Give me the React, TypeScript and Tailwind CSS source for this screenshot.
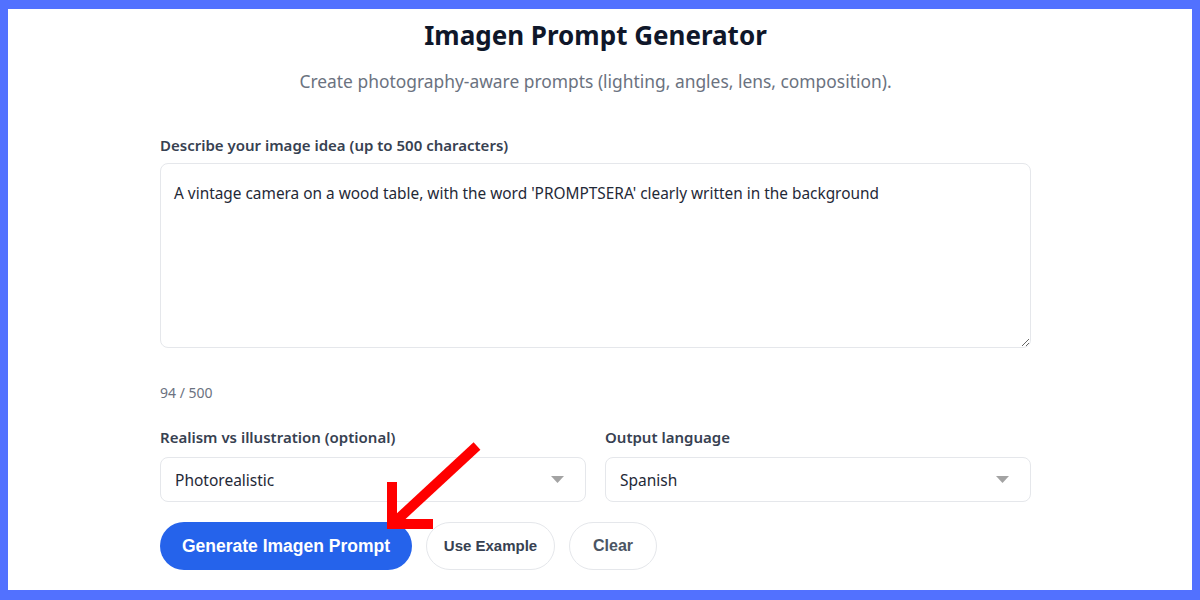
import { useState } from 'react'

const idea =
  "A vintage camera on a wood table, with the word 'PROMPTSERA' clearly written in the background"

function FakeSelect({ label, value }: { label: string; value: string }) {
  return (
    <div className="flex flex-col">
      <label className="text-[15px] leading-5 font-semibold text-[#374151]">{label}</label>
      <div className="mt-[10px] flex h-[45px] items-center justify-between rounded-lg border border-[#e5e7eb] bg-white pl-[14px] pr-[21px] text-[15.5px] text-[#1f2937]">
        <span className="pt-[3px]">{value}</span>
        <svg width="13" height="7" viewBox="0 0 13 7" aria-hidden>
          <path d="M0 0h13L6.5 7z" fill="#a3a3a3" />
        </svg>
      </div>
    </div>
  )
}

export default function App() {
  const [text, setText] = useState(idea)

  return (
    <div
      className="relative h-screen bg-[#5271ff] pt-[9px] pr-[8px] pb-[10px] pl-[8px]"
      style={{ fontFamily: '"Noto Sans", "Open Sans", sans-serif' }}
    >
      <div className="h-full overflow-hidden bg-white">
        <div className="ml-[152px] w-[871px]">
          <h1 className="mt-[10px] text-center text-[26px] leading-8 font-bold text-[#0f172a]">
            Imagen Prompt Generator
          </h1>
          <p className="mt-[18px] text-center text-[17.4px] leading-6 text-[#6b7280]">
            Create photography-aware prompts (lighting, angles, lens, composition).
          </p>

          <label className="mt-[42px] block text-[15px] leading-5 font-semibold text-[#374151]">
            Describe your image idea (up to 500 characters)
          </label>
          <textarea
            value={text}
            onChange={(e) => setText(e.target.value)}
            className="mt-[8px] block h-[185px] w-full rounded-lg border border-[#e5e7eb] px-[13px] py-[18px] text-[15.4px] leading-6 text-[#1f2937] outline-none"
          />
          <p className="mt-[35px] text-[14px] leading-5 text-[#6b7280]">{text.length} / 500</p>

          <div className="mt-[24px] grid grid-cols-2 gap-[19px]">
            <FakeSelect label="Realism vs illustration (optional)" value="Photorealistic" />
            <FakeSelect label="Output language" value="Spanish" />
          </div>

          <div
            className="mt-[20px] flex items-center gap-[14px] font-bold"
            style={{ fontFamily: '"Liberation Sans", Arial, sans-serif' }}
          >
            <button
              type="button"
              className="h-[48px] w-[252px] rounded-full bg-[#2563eb] text-[17.5px] text-white"
            >
              Generate Imagen Prompt
            </button>
            <button
              type="button"
              className="h-[48px] w-[129px] rounded-full border border-[#e5e7eb] bg-white text-[15px] text-[#374151]"
            >
              Use Example
            </button>
            <button
              type="button"
              className="h-[48px] w-[88px] rounded-full border border-[#e5e7eb] bg-white text-[16px] text-[#4b5563]"
            >
              Clear
            </button>
          </div>
        </div>
      </div>

      <svg
        className="pointer-events-none absolute top-0 left-0"
        width="1200"
        height="600"
        viewBox="0 0 1200 600"
        aria-hidden
      >
        <g stroke="#ff0000" strokeWidth="10" fill="none" strokeLinejoin="miter">
          <path d="M477 446L396 521" />
          <path d="M392 482V524H433" />
        </g>
      </svg>
    </div>
  )
}
